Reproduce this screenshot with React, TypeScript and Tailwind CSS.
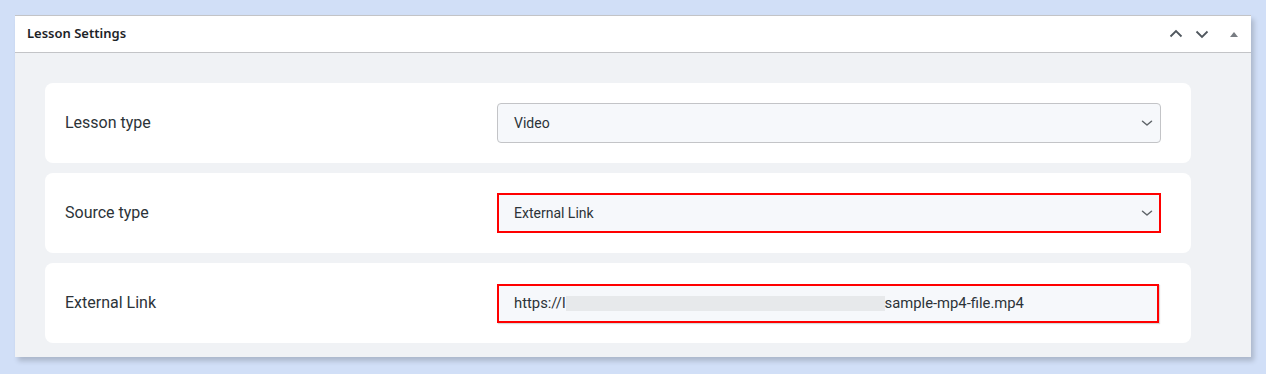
import React from "react";

const Chevron = () => (
  <svg width="14" height="14" viewBox="0 0 14 14" fill="none" className="shrink-0">
    <path d="M2.5 5.2 L7 9 L11.5 5.2" stroke="#5f6469" strokeWidth="1.5" strokeLinecap="round" strokeLinejoin="round" />
  </svg>
);

function Row({ label, children }: { label: string; children: React.ReactNode }) {
  return (
    <div className="flex h-[80px] items-center rounded-lg bg-white pl-5 pr-[30px]">
      <div className="w-[432px] text-[16px] text-[#2c3338]" style={{ fontFamily: "Roboto, sans-serif" }}>
        {label}
      </div>
      <div className="flex-1">{children}</div>
    </div>
  );
}

export default function App() {
  return (
    <div className="min-h-[374px] w-[1266px] bg-[#d1dff7] pt-[15px] pl-[15px]">
      <div className="w-[1236px] border-t border-[#c3c4c7] bg-[#f0f2f5] shadow-[3px_4px_5px_rgba(0,0,0,0.18)]">
        <div className="flex h-[37px] items-center justify-between border-b border-[#c3c4c7] bg-white pl-3 pr-[12px]">
          <div className="text-[13px] font-semibold text-[#1d2327]" style={{ fontFamily: "'Noto Sans', 'Open Sans', sans-serif" }}>
            Lesson Settings
          </div>
          <div className="flex items-center">
            <svg width="16" height="16" viewBox="0 0 16 16" fill="none">
              <path d="M2.5 10.5 L8 5 L13.5 10.5" stroke="#50575e" strokeWidth="1.8" />
            </svg>
            <svg width="16" height="16" viewBox="0 0 16 16" fill="none" className="ml-[10px]">
              <path d="M2.5 5.5 L8 11 L13.5 5.5" stroke="#50575e" strokeWidth="1.8" />
            </svg>
            <svg width="10" height="10" viewBox="0 0 10 10" className="ml-[19px]">
              <path d="M1 8 L5 3 L9 8 Z" fill="#787c82" />
            </svg>
          </div>
        </div>
        <div className="flex flex-col gap-[10px] pt-[30px] pb-[14px] pl-[30px] pr-[60px]">
          <Row label="Lesson type">
            <div className="flex h-[40px] items-center justify-between rounded border border-[#c3c4c7] bg-[#f6f8fb] pl-4 pr-[6px] text-[14px] text-[#2c3338]" style={{ fontFamily: "Roboto, sans-serif" }}>
              <span>Video</span>
              <Chevron />
            </div>
          </Row>
          <Row label="Source type">
            <div className="flex h-[40px] items-center justify-between border-2 border-[#ff0000] bg-[#f6f8fb] pl-[15px] pr-[5px] text-[14px] text-[#2c3338]" style={{ fontFamily: "Roboto, sans-serif" }}>
              <span>External Link</span>
              <Chevron />
            </div>
          </Row>
          <Row label="External Link">
            <div className="mr-[2px] flex h-[39px] items-center border-2 border-[#ff0000] bg-[#f6f8fb] pl-[15px] text-[14.8px] text-[#2c3338] shadow-[1px_1px_1px_rgba(0,0,0,0.15)]" style={{ fontFamily: "Roboto, sans-serif" }}>
              <span>https://l</span>
              <span className="h-[15px] w-[319px] bg-[#e7e9eb]" />
              <span>sample-mp4-file.mp4</span>
            </div>
          </Row>
        </div>
      </div>
    </div>
  );
}
